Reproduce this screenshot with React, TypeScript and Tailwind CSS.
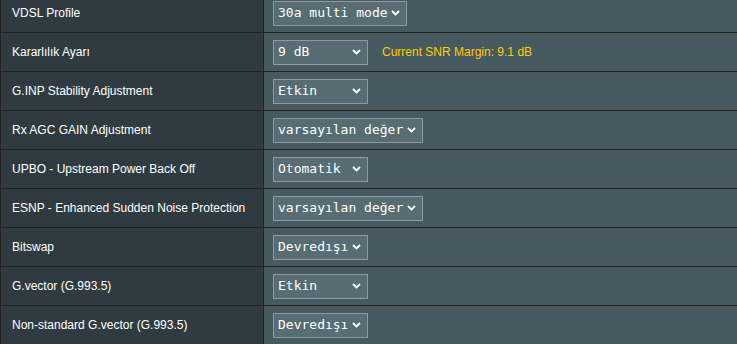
import React from "react";

interface Row {
  label: string;
  value: string;
  width: string;
  note?: string;
}

const rows: Row[] = [
  { label: "VDSL Profile", value: "30a multi mode", width: "w-[134px]" },
  {
    label: "Kararlılık Ayarı",
    value: "9 dB",
    width: "w-[95px]",
    note: "Current SNR Margin: 9.1 dB",
  },
  { label: "G.INP Stability Adjustment", value: "Etkin", width: "w-[95px]" },
  { label: "Rx AGC GAIN Adjustment", value: "varsayılan değer", width: "w-[150px]" },
  { label: "UPBO - Upstream Power Back Off", value: "Otomatik", width: "w-[95px]" },
  {
    label: "ESNP - Enhanced Sudden Noise Protection",
    value: "varsayılan değer",
    width: "w-[150px]",
  },
  { label: "Bitswap", value: "Devredışı", width: "w-[95px]" },
  { label: "G.vector (G.993.5)", value: "Etkin", width: "w-[95px]" },
  { label: "Non-standard G.vector (G.993.5)", value: "Devredışı", width: "w-[95px]" },
];

const Chevron = () => (
  <svg width="9" height="6" viewBox="0 0 9 6" className="shrink-0">
    <path d="M1 1 L4.5 4.5 L8 1" fill="none" stroke="#ffffff" strokeWidth="1.8" />
  </svg>
);

const App: React.FC = () => {
  return (
    <div className="h-[344px] w-[737px] overflow-hidden bg-[#475A5F] font-['Liberation_Sans',Arial,sans-serif]">
      <div className="-mt-[6px]">
        {rows.map((row) => (
          <div key={row.label} className="flex h-[39px] border-b border-[#222]">
            {/* Label cell */}
            <div className="flex w-[264px] shrink-0 items-center border-x border-[#222] bg-[#2F3B40] pl-[11px] text-[12px] text-white">
              {row.label}
            </div>

            {/* Value cell */}
            <div className="flex flex-1 items-center pl-[9px]">
              <div
                className={`${row.width} flex h-[25px] items-center justify-between border border-[#8E9A9D] bg-[#576D73] pl-[4px] pr-[6px] font-['DejaVu_Sans_Mono',monospace] text-[13px] text-white`}
              >
                <span className="whitespace-nowrap">{row.value}</span>
                <Chevron />
              </div>
              {row.note && (
                <span className="ml-[14px] text-[12px] text-[#FFCC00]">{row.note}</span>
              )}
            </div>
          </div>
        ))}
      </div>
    </div>
  );
};

export default App;
